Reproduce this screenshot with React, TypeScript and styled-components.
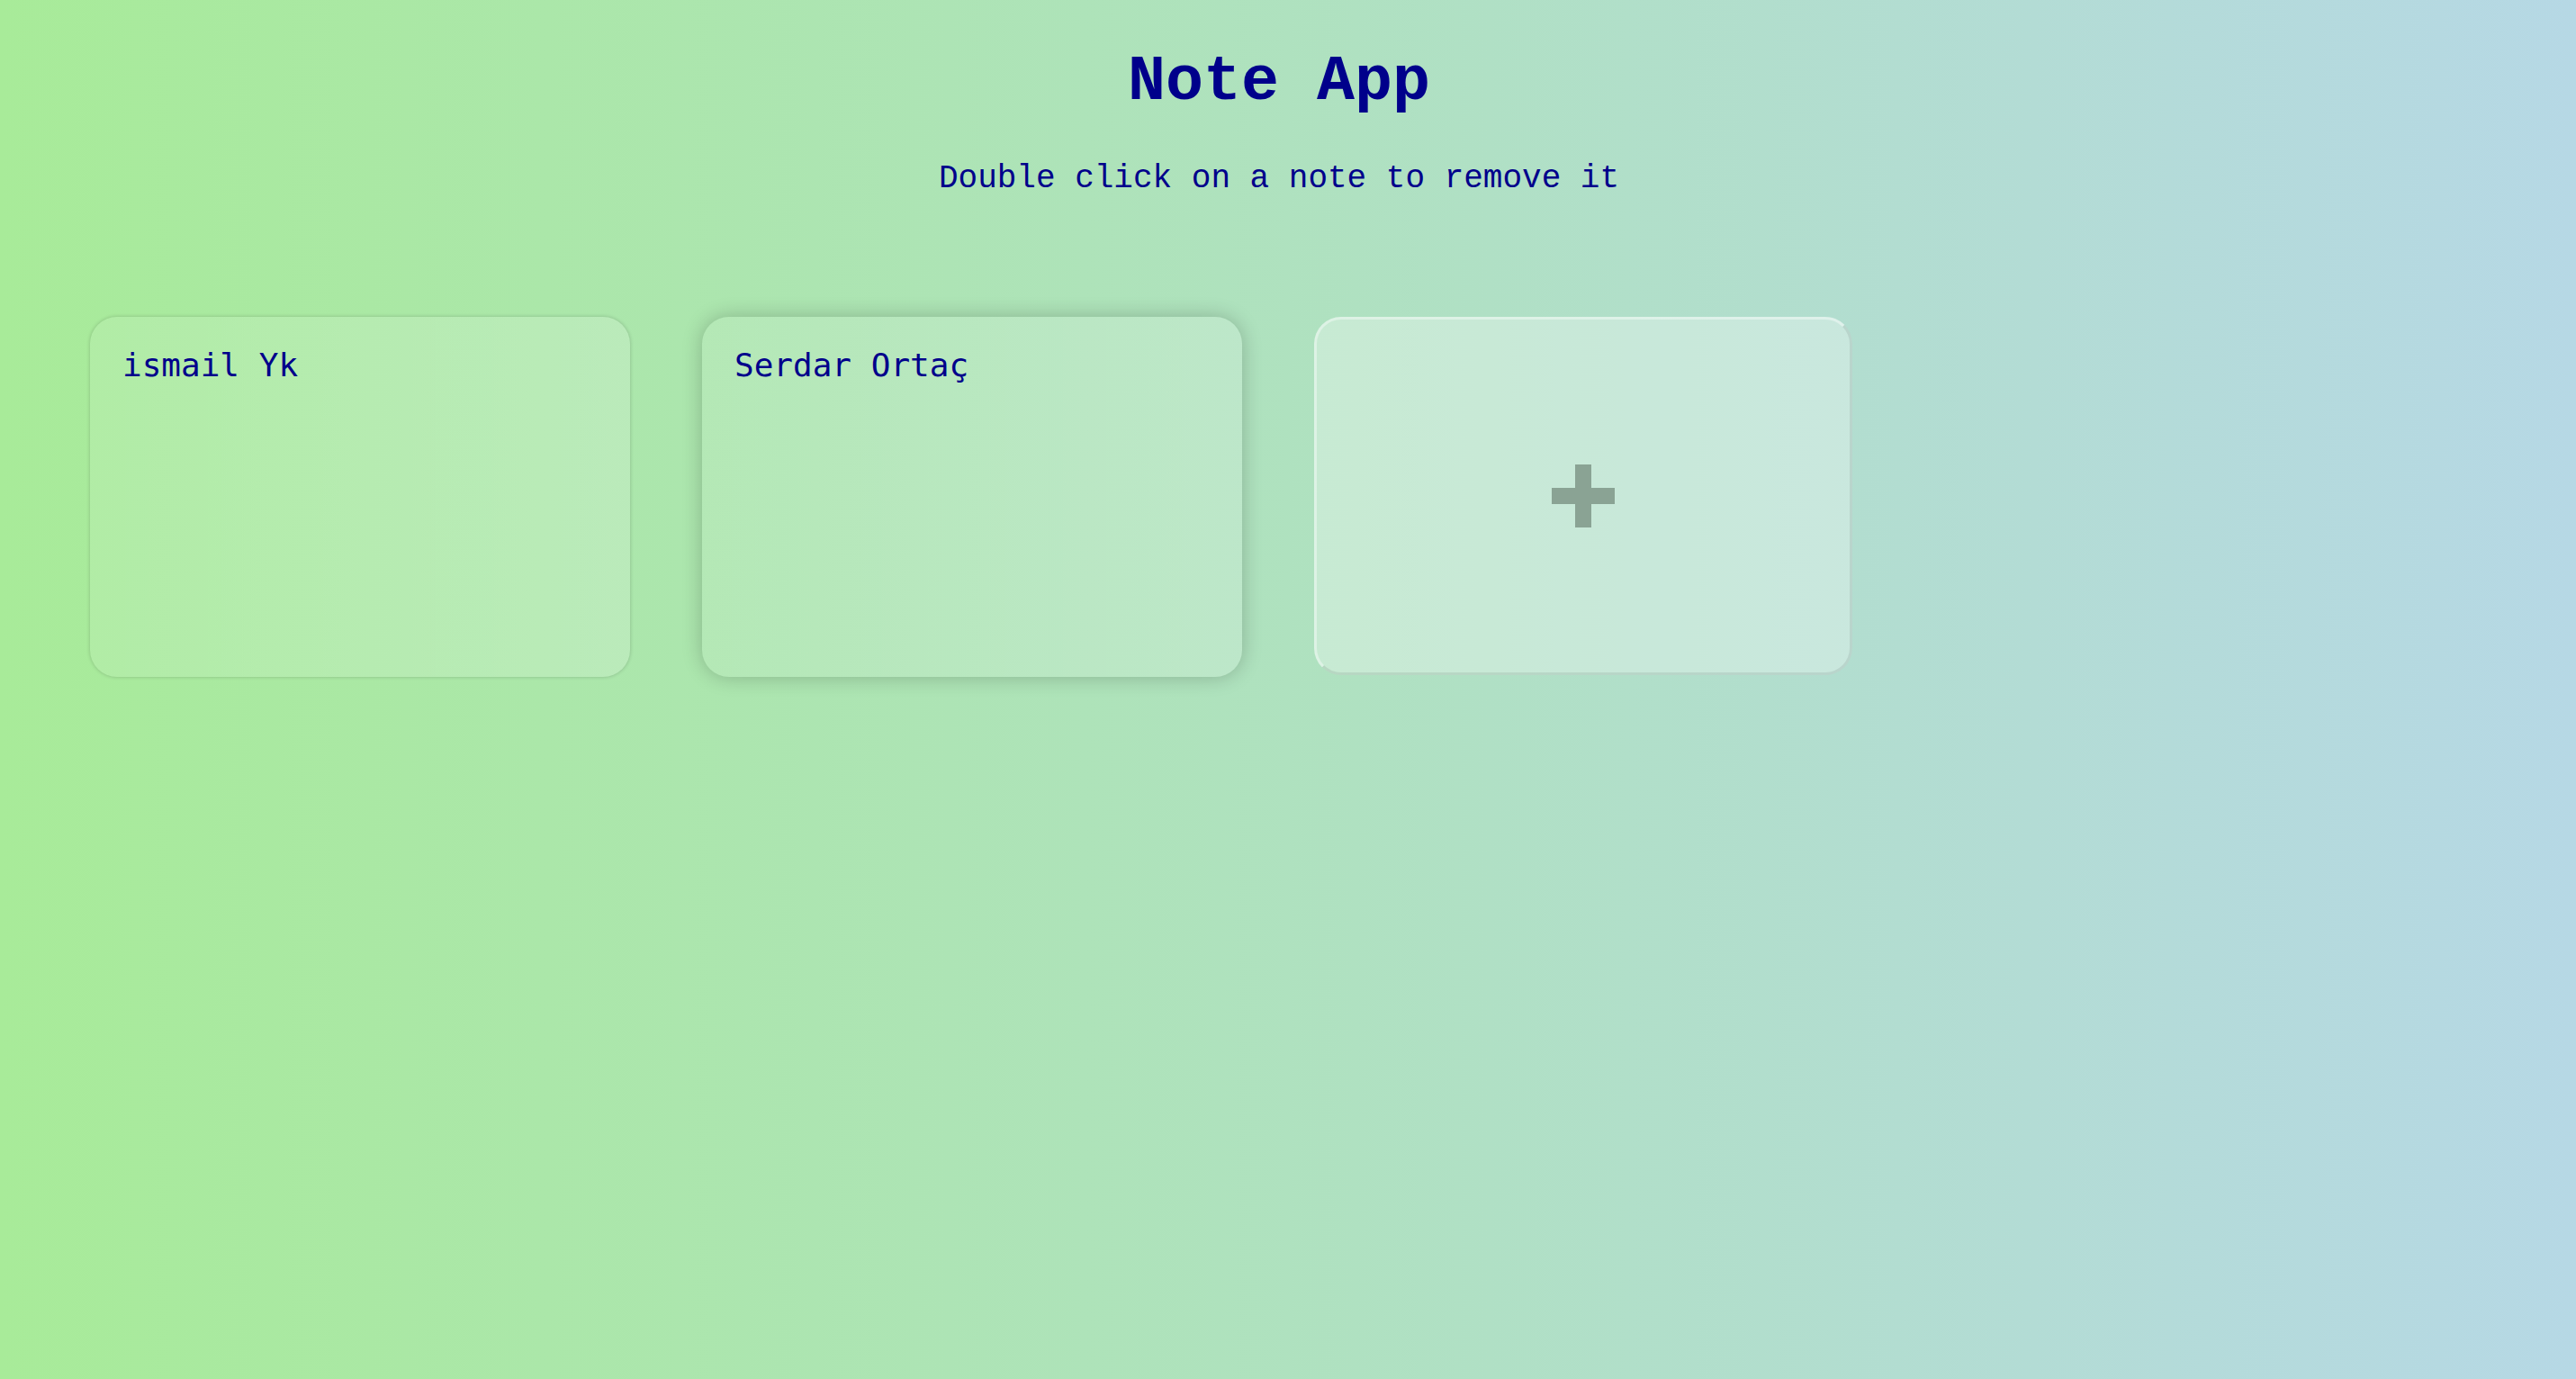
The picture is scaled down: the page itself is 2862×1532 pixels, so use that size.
import React, { useEffect, useRef, useState } from "react";
import styled, { createGlobalStyle } from "styled-components";

const GlobalStyle = createGlobalStyle`
  * {
    box-sizing: border-box;
  }

  body {
    margin: 0;
    font-family: "Liberation Mono", "Courier New", monospace;
    background: linear-gradient(to right, #a8eb99, #b6d8e5);
    min-height: 100vh;
  }
`;

type Note = {
  id: number;
  content: string;
};

const App: React.FC = () => {
  const [notes, setNotes] = useState<Note[]>([
    { id: 1, content: "ismail Yk" },
    { id: 2, content: "Serdar Ortaç" },
  ]);
  const lastRef = useRef<HTMLTextAreaElement>(null);

  useEffect(() => {
    const el = lastRef.current;
    if (el) {
      el.focus();
      el.setSelectionRange(el.value.length, el.value.length);
    }
  }, []);

  const updateNote = (id: number, content: string) => {
    setNotes(notes.map((n) => (n.id === id ? { ...n, content } : n)));
  };

  const removeNote = (id: number) => {
    setNotes(notes.filter((n) => n.id !== id));
  };

  const addNote = () => {
    setNotes([...notes, { id: Date.now(), content: "" }]);
  };

  return (
    <Page>
      <GlobalStyle />
      <Header>
        <Title>Note App</Title>
        <Subtitle>Double click on a note to remove it</Subtitle>
      </Header>
      <Board>
        {notes.map((note, i) => (
          <NoteArea
            key={note.id}
            ref={i === notes.length - 1 ? lastRef : undefined}
            value={note.content}
            placeholder="Empty Note"
            onChange={(e) => updateNote(note.id, e.target.value)}
            onDoubleClick={() => removeNote(note.id)}
            spellCheck={false}
          />
        ))}
        <AddButton onClick={addNote} aria-label="Add note">
          <svg width="70" height="70" viewBox="0 0 70 70">
            <path d="M26 0h18v26h26v18H44v26H26V44H0V26h26z" fill="currentColor" />
          </svg>
        </AddButton>
      </Board>
    </Page>
  );
};

const Page = styled.div`
  min-height: 100vh;
  padding: 50px 100px 60px;
`;

const Header = styled.header`
  display: flex;
  flex-direction: column;
  align-items: center;
  padding-right: 20px;
`;

const Title = styled.h1`
  margin: 0;
  font-family: "Liberation Mono", "Courier New", monospace;
  font-weight: 700;
  font-size: 70px;
  line-height: 84px;
  color: #00008b;
`;

const Subtitle = styled.p`
  margin: 43px 0 0;
  font-family: "Liberation Mono", "Courier New", monospace;
  font-size: 36px;
  line-height: 43px;
  color: #00008b;
`;

const Board = styled.div`
  display: flex;
  flex-wrap: wrap;
  gap: 80px;
  margin-top: 132px;
`;

const NoteArea = styled.textarea`
  width: 600px;
  height: 400px;
  padding: 33px 36px;
  border: none;
  border-radius: 30px;
  resize: none;
  outline: none;
  font-family: "DejaVu Sans Mono", monospace;
  font-size: 36px;
  line-height: 42px;
  color: #00008b;
  caret-color: #00008b;
  background: linear-gradient(
    to right,
    rgba(255, 255, 255, 0.1),
    rgba(255, 255, 255, 0.18)
  );
  box-shadow: 0 0 4px rgba(0, 0, 0, 0.2);

  &:focus {
    box-shadow: 0 0 22px rgba(0, 0, 0, 0.22);
  }

  &::placeholder {
    color: rgba(0, 0, 139, 0.4);
  }
`;

const AddButton = styled.button`
  width: 598px;
  height: 398px;
  display: flex;
  align-items: center;
  justify-content: center;
  padding: 0;
  border: 3px solid;
  border-color: rgba(255, 255, 255, 0.4) rgba(0, 0, 0, 0.08)
    rgba(0, 0, 0, 0.08) rgba(255, 255, 255, 0.4);
  border-radius: 30px;
  background: rgba(255, 255, 255, 0.3);
  color: #8aa394;
  cursor: pointer;
`;

export default App;
